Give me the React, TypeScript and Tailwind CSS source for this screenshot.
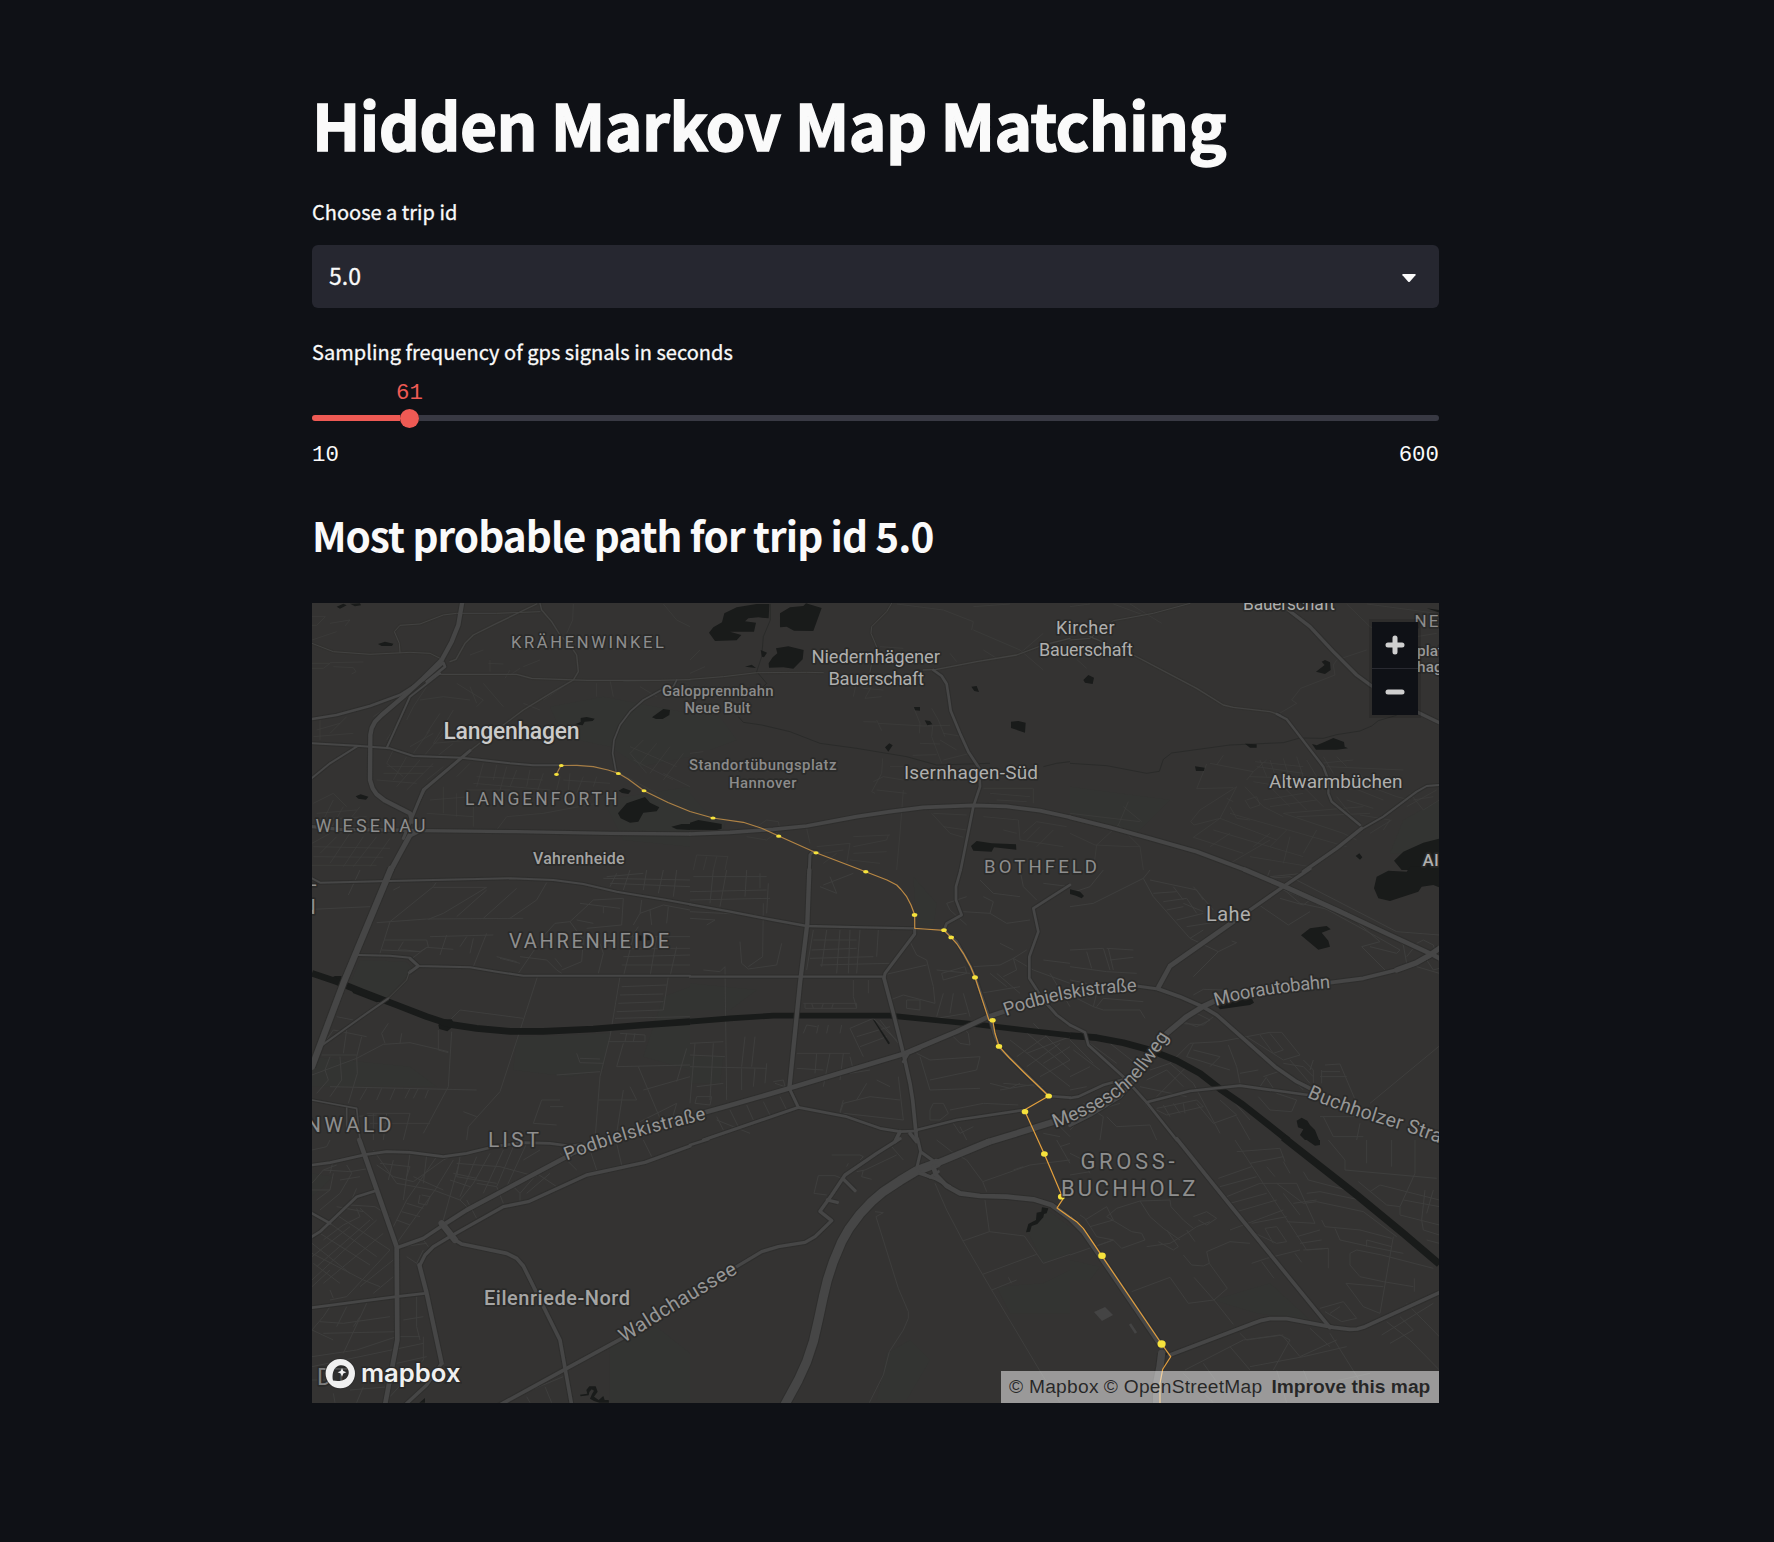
import React from "react";

type Line = [width: number, path: string];
interface Tile {
  x: number;
  y: number;
  green?: string;
  water: string;
  rail?: Line[];
  stream?: string;
  minor: string;
  roads: Line[];
}

/* Each tile holds its vectors at three units per map pixel. */
const tiles: Tile[] = [
  {
    x: 310,
    y: 600,
    green: "M720 320L880 290L1140 340V470L990 500L900 440L760 410ZM880 600L1140 560V740L940 720Z",
    water:
      "M80 20L100 11L110 16L90 26ZM120 11L150 10L153 16L135 19ZM204 132L225 125L250 131L246 138L215 138ZM1026 352L1060 327L1080 330L1078 345L1058 357L1038 357ZM795 373L812 366L812 354L830 351L854 356L848 363L824 365L818 376ZM137 589L152 583L175 590L168 599L145 596ZM926 572L940 564L963 572L955 582L936 579ZM924 640L950 610L1005 591L1020 608L1048 622L1040 634L1000 638L985 665L960 668L932 655ZM1084 680L1115 672H1140V690L1100 688Z",
    minor:
      "M6 50H46L20 76H6M60 70L120 60L105 78M6 190H60L40 205H6M6 120L80 95M60 188L160 186M70 200L130 203L138 215L125 222M540 180V215M535 190L580 192M600 210L585 235M630 205L600 225M480 165L520 150M790 12L788 60L770 100M1060 12L1100 60L1140 80M860 250V290M900 240L910 290M940 245L1020 242M990 260L1040 290M700 300L760 260M640 310L690 330M520 250L580 320M440 250L520 300L500 320M350 260L310 320L290 360M330 300L400 290L480 300M390 340L350 400M430 330L370 430M280 340L230 420M220 330L190 350M60 400L110 350M20 390L90 370M10 410L130 400M30 350V420M370 430L480 420M300 440L370 400M310 460L360 390M340 470L400 400M380 470L430 430M250 450L230 490L280 530M290 470L250 540M330 480L260 560M370 490L290 570M400 500L350 540M230 500L370 500M220 520L340 520M200 540L320 550M480 490L440 530M520 490L500 560M560 495L550 540M590 500L570 570M620 510L600 560M660 510L650 560M700 520L680 580M500 530L700 540M490 550L720 570M470 570H600M750 530L740 570M780 520L775 570M820 530L800 580M860 530L850 560M760 540L900 550M400 560V640M440 580V650M490 610V680M360 600L480 590M350 640L490 650M10 610L70 580L110 620M20 640L140 630M30 680L70 600M60 690L100 620M90 695L150 620M10 660L170 650M6 730L60 700M30 760L80 710M60 790L120 700M100 800L160 710M130 800L200 710M180 800L240 715M10 740L240 745M10 770L220 772M6 796H200M1000 420L960 460L1010 520M1040 430L990 490M1080 440L1020 520M1120 460L1060 540M960 440L1100 500M970 480L1090 540M930 520L1040 580M1060 520L1140 560M560 690L590 650L700 640M700 640L860 610M500 310L480 260M690 180L640 200",
    roads: [
      [3, "M6 130L70 155L180 163L300 157L360 160L400 180M270 158L268 130L253 95L270 76L330 72L400 45L440 40L560 40L690 35"],
      [4, "M690 10L695 30L725 65L750 105L780 135L800 165L805 215L790 240L730 275L640 330L580 375M420 185L438 178L465 130L490 105L560 70L680 12"],
      [4, "M380 223L620 223L665 235L830 241L1050 241L1140 239M580 375L480 452L350 560L330 600L300 660"],
      [6, "M6 430L140 437L240 445L310 468L455 473L600 490L670 496H750M6 534L60 490L140 440M230 444L250 400L300 290L390 220"],
      [5, "M918 515L908 460L912 420L930 375L960 335L1000 300L1050 272L1090 260L1100 240"],
      [8, "M6 357L80 345L180 318L270 285L340 240L400 188L405 200L350 245"],
      [13, "M456 10L445 75L425 125L395 180L340 235L280 290L215 345L195 365L185 385L181 405L180 540L188 565L200 583L225 602L300 640L307 665"],
      [10, "M6 680L90 688L240 690L340 692L620 695L900 700L1140 702"],
      [15, "M330 690L300 705L270 760L243 810"],
      [9, "M307 650L280 715M480 452L340 570L307 650"],
    ],
  },
  {
    x: 690,
    y: 600,
    green: "M0 330L90 350L140 420L60 450H0ZM0 580L60 650H110L100 690H0Z",
    water:
      "M57 98L70 82L96 67L103 40L140 22L200 12H238L236 55L205 52L175 55L165 64L198 68L192 95L160 95L120 95L154 105L140 121L75 123ZM270 40L300 22L340 18L348 10L395 24L370 93L312 92L290 80L270 82ZM236 190L248 172L262 160L258 145L295 139L341 150L338 178L310 206L280 202L237 203ZM212 150L231 158L222 172L216 170ZM165 200L185 194L198 204ZM844 260L860 258L867 276L853 273ZM672 321H690V332L675 331ZM704 361L720 363L727 373L712 376ZM585 442L598 430L608 436L595 455ZM963 365L985 363L1007 368L1005 398L963 384ZM843 738L860 723L905 730L978 733L979 749L912 742L905 755L850 752ZM0 668L25 660L95 672V686L80 690L0 689Z",
    stream:
      "M241 12V60L220 110L215 170L200 215L230 250L200 280M145 350L160 367L215 375L300 395L390 430L500 445L650 470L740 495L900 490M1060 500L1100 490L1140 485",
    minor:
      "M0 180L30 150M0 220L45 200M500 245L490 290M550 250L525 295L575 290M520 265L580 270M560 360L575 392M520 365L560 366M565 370L700 378L780 376M672 325L690 370L688 400M725 325L745 360L765 410M728 378L725 410L755 490M690 430L750 432M668 466L740 464M760 400L820 410M750 420L800 450M760 480L840 460M578 475L575 520L545 575L555 580M550 545L580 530L640 540M560 570L650 580M640 570L630 700L620 810M600 500L640 500M880 565H1030V610M900 580L1020 590M920 600L1010 605M730 640L830 645M725 640L780 700L820 712M760 680L830 690M880 650L985 660L990 720L1120 740M1000 700L1040 665L1130 680M1010 720L1050 680M1040 740L1090 690M940 690L980 700M350 685L360 730M380 740L480 730L470 790M400 760L460 750M490 740L590 720L595 705M490 710L600 705M490 760L590 755M480 780L570 790M400 790L440 760M10 810L20 765L115 770M40 810L50 770M70 810L80 770M105 810L113 770M170 710L230 720L270 690L265 665L230 660L185 690M620 12L760 30L850 65L845 90M850 90L990 150L1060 210M780 160L800 185M880 150L920 175M990 160L1060 100M570 140L640 145M560 150L610 180M0 460L40 455M850 20L960 12",
    roads: [
      [3, "M0 238L100 230L200 218L350 217L400 218M540 215L545 190L562 145L543 100L545 80L590 35L605 10"],
      [4, "M700 210L740 208L860 185L980 165L1060 135L1140 115"],
      [8, "M730 210L755 228L770 252L776 290L782 332L810 400L835 455L868 505L870 560L850 620L812 810"],
      [11, "M0 702L120 697L250 688L350 678L500 650L600 635L700 622L850 616L950 619L1050 632L1140 652"],
      [9, "M358 810L360 765L368 755L385 758"],
    ],
  },
  {
    x: 1070,
    y: 600,
    green: "M0 560L300 600L200 700L0 640ZM1000 660L1108 600V760H960Z",
    water:
      "M738 215L764 195L755 185L765 180L780 187L782 210L765 222ZM40 240L55 225L72 233L68 252L45 248ZM525 431L560 433V443L540 443ZM375 499L404 503L402 513H378ZM726 432L740 436L765 425L790 414L822 426L824 440L834 445L800 449H738ZM972 782L1000 755L1060 728L1108 716V810H995ZM857 768L868 760L877 772L870 779ZM1070 25L1108 30V38Z",
    stream:
      "M0 490L110 497L230 520L268 514L280 478L305 459L480 435L640 428L690 414L760 415L800 404L870 393L905 378L925 362L980 346",
    minor:
      "M20 178L50 205M0 20L60 12M180 12L275 70M130 12L220 45M830 12L900 80L1000 130M890 12L1100 40M1040 110L1100 100M620 345L680 310L665 300L692 265L795 225L790 195L800 180L890 150M460 466L440 495M410 492L380 566L490 563M420 490L550 515M500 560L390 630L362 665L372 675L450 655L500 560M530 540L550 515L590 480M525 560L580 620L640 650M480 620L500 655L540 660M470 595L490 605M530 600L560 590L570 615L540 625L525 600M555 485L700 500M560 500L700 520M540 530L700 535M550 545L640 560M570 480L590 530M600 480L620 540M640 475L660 540M680 470L700 530M710 480L740 530M760 470L790 520M800 470L830 500M750 490L850 480M770 500L1000 510M600 560L660 620M640 560L710 630M700 560L760 620M580 600L700 580M600 620L740 600M640 640L880 620M680 650L900 640M790 540L900 550L950 530M830 530L840 570M870 520L900 570M800 590L840 640M830 600L910 625M840 560L940 600M900 560L980 590L1020 600M1020 580L1060 630L1108 600M1030 600L1090 590M1010 620L1100 570M870 645L960 660L940 690M900 700L965 660M640 640L820 700L860 720M480 640L830 740M370 712L450 655L620 720M430 690L700 770M480 700L420 740M550 740L600 700M600 740L650 690M640 790L660 710M540 770L720 800M480 790L600 720M700 760L740 690M370 712L520 760M175 605L145 675L80 735L70 810M145 675L210 740L220 810M0 640L210 665M0 700L75 735M160 620L215 665M210 740L180 740L75 735",
    roads: [
      [3, "M0 120L60 115L130 62L250 40L360 10"],
      [4, "M60 110L190 165L380 265L460 315L490 322L600 335L630 345"],
      [7, "M620 342L650 358L675 390L760 500L775 540V580L785 605L870 675"],
      [10, "M655 30L720 80L790 155L860 225L905 258M1040 335L1108 368"],
      [6, "M870 690L940 650L1040 575L1070 558L1108 555"],
      [10, "M875 685L800 745L700 815"],
      [12, "M0 652L120 682L240 715L380 755L524 809"],
    ],
  },
  {
    x: 310,
    y: 870,
    green: "M150 270L290 275L310 300L230 385L120 340ZM620 500L900 490L880 600L780 620L610 600ZM1060 380L1140 350V600L1000 560ZM6 560L300 590L380 650H6Z",
    water: "M60 325L75 318H95L92 335ZM110 340L190 370L230 390L200 397L130 370ZM385 465L400 448L425 448L435 465L412 484L388 477ZM985 196L1035 200L1030 210L985 212Z",
    rail: [
      [20, "M6 310L80 335L160 367L260 405L350 440L420 463L500 475L600 484H700L850 477L1000 465L1140 455"],
    ],
    minor:
      "M6 118L180 110M150 0L115 75M378 38L370 50L240 155L210 250M270 50L250 60M370 52H530L400 130L355 148M530 60L440 140M620 55L520 145M710 38L680 90L600 145M200 158L350 147L640 145M222 210L350 210L355 230L330 245L285 240L265 240L280 215M215 240L330 245M300 270L350 232L430 238M360 200L550 195M410 195L390 255M470 200L450 230M490 205L480 250M530 190L490 290M570 265L630 280M560 260L620 275M683 225L625 310M630 260L710 270L740 300L755 310M690 210L735 160L780 155L820 210L815 275L755 300M780 155L850 90L940 85L935 165L830 175M810 100L930 115M880 110V130M800 150L850 160M870 220L880 250L865 310M735 265L755 290M890 20L1000 10M900 40L1140 50M920 10L900 50M960 0L940 60M1010 0L1000 60M1060 0L1045 70M1100 0L1090 80M1140 30L880 25M995 90L990 130L1060 105L1140 120M1075 110L1070 160M970 165L990 130M985 170L965 200H1140M1020 120L1025 165M945 235H1140M940 260L1140 255M935 285H1140M1100 230L1080 320M1040 200L1020 320M970 200L940 320M930 320L900 500L870 620L855 810M935 350L1070 345M930 375L1060 372M925 400L1060 395M920 425L1060 420L1075 320M915 445L1140 440M683 318L650 420L570 665L475 770L470 810M420 450L450 420L640 445M425 485L415 650L340 790M385 480V540L415 548M35 530L70 480L170 500M110 480L100 550M155 500L140 560L142 610L115 700M35 555H140M80 440L130 450M235 460L215 490L225 520M275 490L270 520M6 615L140 565L220 523L300 518L415 545M60 560L45 600L55 630L20 670M90 560L95 630L60 680M60 650L280 655L500 660M170 655L150 690M215 655L200 690M255 655L240 690M300 655L285 685M325 655L310 685M355 660L345 685M895 515H1005V495L930 490M950 490L945 515M975 490L970 515M800 550L810 578L880 580M810 565L870 567M940 520L920 590L1140 585M740 615L870 605M865 690L980 690L960 650M695 690H750M695 690L670 760L740 765M985 590L1050 745M1130 535L1100 635M1000 660L1140 620M940 660L920 790M720 710H760M460 725L500 740M980 760L1100 700L1080 770M170 730H300L280 810M180 760H360M190 730V810M230 730L220 810M130 740L200 735",
    roads: [
      [6, "M6 25L30 38L240 33L600 25L730 30L820 42L920 65L1070 90L1140 103"],
      [6, "M145 255L240 257L300 263L325 288L480 292L560 305L640 317H1140"],
      [9, "M300 265L325 288L298 308"],
      [6, "M30 530L100 480L170 430L235 385"],
      [3, "M235 385L290 330L300 300"],
      [5, "M6 690L140 715L150 810M110 715V780"],
      [19, "M243 -4L100 340L6 590"],
    ],
  },
  {
    x: 690,
    y: 870,
    green: "M0 340L200 360L120 420H0ZM670 20L740 100L730 170L680 170ZM0 560L100 560L90 640H0Z",
    water: "M548 448L555 452L600 520L595 523Z",
    rail: [[17, "M0 455L120 445L250 437H600L700 447L850 462L1000 480L1140 496"]],
    minor:
      "M70 0L60 100M110 0L90 110M0 65L230 60M0 90L240 85M10 20L230 20M170 0L165 80M210 10V55M235 40L230 130M0 125L100 130L200 135M0 145L75 150L50 165M150 215L155 280L175 297L260 285L275 220M220 100L218 260L175 290M105 290L110 690M40 300L90 305L105 290M370 180L350 300M410 180L395 290M450 180L440 310M480 180L475 310M510 180L500 310M370 210H500M365 240L500 235M360 265L550 260M390 285L600 280M565 180L560 260M490 330V380L500 415M535 330V370M340 400H500V415H345V400M365 400L370 415M400 400L395 415M430 400L425 415M580 315L710 285M655 205L680 255L710 270L730 350L735 400L640 375L600 390M740 300L840 310M755 310L825 290L830 310L760 330L755 310M650 390H690V420L650 415V390M760 370L740 440M790 370L780 430M820 370L840 440M740 445L830 430M780 490L810 520L840 525L835 490L810 460M900 310L950 350M920 310L990 370M870 370L990 350M340 490L350 465L380 470M380 490L385 465M410 490L415 465M450 490L455 465M480 475L550 445L630 520M500 500L600 470M510 530L590 500M480 475L520 560M570 450L640 540M320 550H480M320 595L400 600M380 550L375 610M420 550L400 650M460 550L450 630M480 560L490 600M0 520L100 515M0 555L105 560M0 590L230 595M15 520L0 700M70 520L60 690M165 500L155 590M195 500L185 590M155 595V660M195 595L190 650M230 580L225 640M20 650L100 640M15 700L60 705L65 680L20 680ZM80 740L100 780M120 720L150 780M170 705L190 750M220 695L240 735M270 680L290 720M80 750L180 790M250 635L280 630L285 650L255 640M450 730L460 700L540 680L630 690M530 640L500 690M560 630L600 650M460 730L640 750L625 620M450 725L460 690M480 610L540 600M420 620L500 590M690 560L720 660L870 655M680 550L720 570L870 560L860 600L720 630M720 720L730 700L760 700L775 730L750 750H720ZM780 720L880 700L985 705M810 770L830 810M790 760L810 790L850 770M870 30L910 70L990 80M880 80L910 95L900 130L950 160M990 0L1000 50L1040 90M950 160L1020 150M900 130L820 125M830 80L770 100L780 120L830 165M930 220L970 240M970 265L980 300L940 320M850 290L930 285L970 265L1030 300L1140 340M1010 240L970 265M1060 40L1140 50M1060 270L1140 280M1080 310L1140 410M940 640L1060 650M930 660L1050 640M1010 550L1140 500M1060 580L1140 530M960 510L1140 650M1000 480L1140 600M1030 460L1140 570M980 560L1080 490M1010 590L1110 520M1050 620L1140 570M900 640L960 655L990 640M1140 720L1080 770M1100 760L1140 800M1060 790L1110 800M390 50L440 70L420 20M400 45L490 10",
    roads: [
      [7, "M0 103L120 125L250 150L350 168L520 172L674 175"],
      [7, "M0 320H580"],
      [9, "M674 175V192L585 310L582 325"],
      [11, "M582 325L610 430L640 550L660 640L668 690L680 810"],
      [13, "M358 0L352 160L330 340L298 655"],
      [9, "M298 655L325 712"],
      [8, "M325 712L470 740L570 775L630 785L680 783"],
      [14, "M40 728L100 712L298 655L640 552L800 485L895 440L940 425"],
      [9, "M640 575L655 550L690 535"],
      [9, "M40 810L325 712"],
      [8, "M680 780L800 750L1000 720"],
      [8, "M812 0L798 50V90L815 135L770 160L762 180L800 215L842 290L857 325L900 450L915 500L930 535L1076 678L1140 683M1140 45L1030 115L1045 185L1018 260V325L1060 390L1100 435L1140 465"],
      [19, "M895 816L990 787L1140 740"],
      [11, "M630 785L615 815M660 790L680 815"],
    ],
  },
  {
    x: 1070,
    y: 870,
    water:
      "M912 55L920 20L955 2L1010 5L1020 -10H1108V52L1090 45L1055 50L1045 65L960 93L925 85ZM693 196L720 175L770 168L782 178L755 188L775 212L780 230L745 239ZM680 752L695 743L712 752L720 765L735 780L747 810H705L690 795L700 778L684 772ZM440 405L545 385L552 398L540 405L450 418ZM0 58L30 65L42 78L35 85L18 77L0 72Z",
    rail: [[20, "M0 497L80 503L160 518L240 540L320 572L390 610L450 657L520 705L590 760L655 812"]],
    minor:
      "M0 110L70 100L220 25L240 0M220 25L250 80L360 205L445 245L370 320M0 70L60 50L100 0M240 30L380 60L400 90M250 70L320 65M280 95L350 85L380 130M290 120L340 110M320 150L400 130M340 100L400 125M310 50L340 90M350 170L480 150M370 50L430 120M445 245L500 218L485 213M360 205L400 180M560 100L655 165L720 125M620 40L690 100L830 130L930 215L875 230L945 300M600 20L700 10M640 60L690 80L720 90L700 105L630 85M600 0L590 25L660 20L980 185L1108 195M700 80L920 200L990 240L980 250L900 230M960 190L1000 225L1010 280L980 300M1040 220L1060 210L1090 225L1100 260M1010 260L1030 235L1060 240M1070 270L1090 300L1108 295M1040 290L1108 310M0 240L100 235L120 300M50 245L65 295M115 235L130 300M110 235L190 240M120 270L190 262M0 290L110 305L200 310M0 330L50 340L80 370L70 410L10 380M80 410L100 385L220 395M70 410L100 420L210 420L225 445M0 360L60 370M370 375L400 358L460 360M330 460L400 465L430 440M380 430L420 450L380 470L340 455M360 520L450 515L530 500L600 487H635L690 555L640 570L530 500M570 495L610 550L640 540L600 490M475 525L500 590L510 640M370 520L350 560L480 600M370 540L450 560L420 590M240 600L300 580L370 640M230 630L290 600L340 650M260 680L320 620L350 590M210 650L350 680M300 580L360 520M510 610L565 600M580 620L640 600L700 660M590 625L620 670L680 690L665 725L600 720L565 680M590 620L570 650M640 580L700 590L730 620M660 570L720 640M700 570L730 600V640M730 570L720 600M765 585L810 582L860 700M755 605H810M750 620H830M755 600V640M900 700L1108 528M750 740L880 740L960 760M760 740L790 800H880M870 760L860 810M110 740L140 770L240 765L260 810M200 670L240 720M260 715L380 690L400 710L290 735L260 720M280 705L300 740M310 700L330 730M340 700L345 730M370 640L450 790M450 690L500 735L430 760L380 700M0 620L60 590M0 660L50 650M10 540L90 600M60 520L140 580M120 520L190 575M0 510L70 580M460 660L540 750M40 700L100 740M100 740L90 810M500 740L540 810M0 780L50 730L150 700",
    roads: [
      [8, "M0 465L45 487L55 525L165 625L230 697L320 810"],
      [8, "M0 684L25 680L100 645L165 627M230 697L360 663L510 647L715 675"],
      [9, "M200 348L265 357"],
      [11, "M265 357L330 380L398 410L440 435L615 590L680 635L730 660"],
      [14, "M265 352L300 288L490 155"],
      [10, "M490 155L640 50L720 -4"],
      [14, "M524 -1L640 48L800 120L960 195L1090 255L1108 265"],
      [11, "M780 338L880 325L980 300L1040 278L1080 258"],
      [16, "M1108 235L1080 255L1040 278L980 300M430 395L398 410L350 440L290 490L280 510"],
      [12, "M210 610L150 680L60 735L0 765"],
    ],
  },
  {
    x: 310,
    y: 1140,
    green: "M900 620L1040 560L1140 640V788H900ZM6 100L70 110L6 170Z",
    water:
      "M328 788L345 774V788ZM810 764L832 761L829 750L838 739H857L863 755L852 770L866 780L880 768L884 780L896 780L897 788H868L852 783L840 776L846 762L852 752L845 748L838 756L836 766L812 769Z",
    minor:
      "M6 30L50 20L60 0M6 130L40 90L80 75M20 180L60 150L70 100M40 90L120 95L180 85M30 210L90 160L125 100L110 75M6 150L60 150M70 60L60 100M90 120L150 110M140 145L120 190M150 205L190 240M120 195L195 200L240 230M140 205L150 230L100 255L40 300M80 200L160 215M80 225L240 330M60 250L200 350M30 280L180 375M6 310L120 400M6 340L160 420L210 440M10 370L90 430M200 240L6 420M220 280L40 430M240 330L110 470L60 480M250 360L150 440M250 410L190 460M6 440L60 390M60 450L70 475M180 240L20 380M120 260L6 350M200 75L250 110L310 125L400 60L420 50M190 30L260 130L370 150L450 180L480 210M210 70L300 80L290 110M250 60L235 120M300 40L280 180M350 45L340 130M380 50L290 180L250 260M430 60L375 150L260 310M450 60L400 240M500 50L450 170M540 40L490 130L450 180M580 30L520 160M610 20L560 140M650 10L590 140M440 70L570 80L680 110M430 100L500 115M420 120L480 140M450 50L440 110L560 130M330 165L325 190L350 195L360 170L335 165M290 190L340 205M275 215L330 230M260 240L300 255M470 180L500 235M500 130L560 140L580 190M600 130L630 160V185M680 100L740 140M700 80L630 160M650 160L720 100M690 30L640 60M750 40L800 90M840 30L860 90M920 10L935 75M1000 0L1025 50M310 110L400 150M280 320L350 310M290 350L320 370L340 330M340 300L355 320M6 570L40 530L60 500M110 500L80 560M170 490L100 640M30 545L100 550L240 530M40 580L260 575M6 570L70 600M6 650L140 630L260 590L330 590M6 680L340 610M130 560L150 530M320 470V560L330 600M340 590V660L240 770M280 540L340 530M260 670L350 650M6 720L50 720M75 788L70 760M120 750L240 740M140 788L160 740M590 780L760 710M650 770L660 788M705 740L725 788",
    roads: [
      [8, "M6 75L60 68L170 43L230 35L300 37L400 50L470 40L560 18L640 8L720 10L780 18L820 12"],
      [8, "M6 290L30 275L140 170L195 153M6 220L60 250"],
      [14, "M148 0L260 320L262 600L225 795"],
      [8, "M6 503L260 470L345 460"],
      [10, "M262 323L340 295L400 255"],
      [13, "M395 258L470 210L780 45"],
      [9, "M780 45L870 10"],
      [10, "M330 375L345 345L370 320L420 290L580 200L655 185L830 105L1005 67L1140 18"],
      [19, "M395 250L435 300"],
      [11, "M435 300L455 312L590 340L620 355L640 378L750 600L785 795"],
      [13, "M328 375L350 460L395 670"],
      [10, "M395 670L350 735L285 795"],
      [11, "M560 800L765 688L940 593"],
    ],
  },
  {
    x: 690,
    y: 1140,
    green: "M920 440L1060 430L1140 390V520H960ZM590 640L660 600L720 660L650 780H560ZM1010 270L1060 200L1140 260V340L1060 370Z",
    water:
      "M1056 202L1075 205L1070 220L1062 222L1060 232L1042 252L1025 258L1020 275L1008 277L1015 252L1038 240L1040 218L1054 215Z",
    minor:
      "M425 45H510L520 50L510 60M470 80L475 70M500 95L525 90L620 45M520 90L515 110L545 118M605 20L640 60M385 107H435L455 115M385 107L372 160L410 165M555 215L580 218L558 230L625 445L655 515V535L640 570L598 635L580 705L538 788M735 130L770 210L820 305L905 450L1060 710L1110 788M740 0L785 35L830 60L878 125L890 155M885 180L898 275L818 303M898 275L1003 288L1060 370L1140 343M878 403L1040 343M878 125L1020 75L1140 60M905 450L980 420M955 412L965 430M1100 0L1140 70M1110 20L1140 10M970 90L1000 80M500 220L530 180L575 150",
    roads: [
      [8, "M0 15L55 -2"],
      [10, "M135 383L215 335L265 320L345 307L375 290L425 242L390 214L425 165L465 105L560 40L630 -4M458 115L495 152M412 180L442 187"],
      [27, "M275 812L325 720L350 665L370 605L385 540L400 470L412 420L430 365L455 305L478 265L510 222L545 185L580 155L630 122L680 92L740 70"],
      [20, "M740 70L895 6"],
      [9, "M683 -4L692 35L680 85M692 35L740 70M692 95L720 112L745 95"],
      [14, "M730 80L738 105L770 138L810 160L870 168L950 170L1030 178L1085 195L1140 235"],
      [10, "M690 100L735 115L780 140"],
    ],
  },
  {
    x: 1070,
    y: 1140,
    green: "M430 480L600 430L720 540L560 520ZM0 360L90 380L60 420H0Z",
    water: "M710 0H750V15L735 17ZM285 638L292 642L287 648Z",
    rail: [[22, "M640 -8L860 165L1000 280L1108 372"]],
    minor:
      "M0 345L130 300L75 320M45 240L110 200L130 240L60 260M30 225L45 235L80 290L130 300L155 325L225 300L215 280L185 275L110 230L140 205L210 183L300 180L303 200L340 240L370 265M210 183L240 230L280 265L330 300M230 320L300 310L350 280L380 260L420 245M265 305L310 330L325 320L290 270M370 230L410 215L440 235L410 255L385 240M350 270L375 305M340 345L365 375L400 378L418 370L410 335L480 305L540 310M418 370L472 445L432 480L355 490L300 412L185 455M372 412L432 480L490 553M545 370L590 355L690 330M575 365L612 415M675 340L695 367M495 0L710 330L775 325V385M500 35L630 25L645 65M540 70L640 50M445 115L545 80M450 140L560 110M470 170L570 130M480 190L590 160M500 215L620 180M480 270L640 210M590 80L615 110M640 65L660 100M570 130L680 130L735 250L650 245M620 130L700 190L740 185L880 215L980 290M640 160L690 225M670 190L740 180M545 250L650 230M555 280L620 310L650 305L620 260L585 265L610 310M680 290L750 270M690 310L755 300M700 330L775 325M710 160L750 155L870 180L900 210M700 95L715 120L830 150M755 240L765 260L870 270L965 295M795 265L810 300L900 320L1000 340M890 320L890 300L965 320M840 340L860 330L935 345L1090 385M840 340V375L870 410L940 425L1030 440M970 290L930 520L880 500L828 430L940 440M1033 415V455M750 505L820 485L860 535L815 545L765 515M780 520L810 500M775 0L825 60V90L1100 115M890 0V70M965 0V80M1035 0V100L990 200V225L1108 255M865 125L950 195L990 200M900 155L930 135L1108 180M1065 150L1055 240M1090 150L1070 220M1000 180L1108 200M1055 240L1060 270L1108 285M1070 300L1108 310M1010 490L1108 590M935 585L1090 490M960 610L1030 570L990 530M950 545L1020 600L1108 690M780 580L880 740M720 565L780 620M640 590L690 650L800 600M480 620L540 690M510 580L530 600L640 585M345 690L520 600L630 585L660 600L610 690M400 670L450 740M340 700L430 788M540 680L700 650L830 620M620 690L650 788M700 690L720 740L900 700M0 40L40 60L60 100M0 105L60 95",
    roads: [
      [11, "M320 -4L480 195L780 563"],
      [11, "M300 645L550 550L575 541L600 536H650L790 562L840 568L862 567L885 560L1108 458"],
      [22, "M275 640L270 680L260 730V800"],
      [15, "M0 235L40 275L95 355L275 620"],
    ],
  },
];

const route =
  "M556.3 774.3L561 765.5L577 765.4L593.3 766.7L608 770L618.3 773.3L628 779L644 790.7L668 802.5L690 811.5L713 818L743.3 822.3L761.7 828.3L778.7 836L816 852.7L865.7 871.7L887 880L896.7 885L901 889.500L906.7 896.7L911 905L914.7 914.7V928.3L924 929L944 930.3L951 937.3L957 944L963.3 953.3L970.7 966.7L975 977.3L989 1020.3H992.7L995 1033.3L999 1046.3L1009 1057.500L1023.3 1071.7L1048.7 1096L1024.3 1110L1044.3 1154L1061.3 1194.3L1062.7 1199.3L1057 1208L1070 1217.3L1077 1222L1083.3 1228.3L1101.7 1255.7L1161.7 1344L1170.7 1356.7L1162.7 1369.3L1160 1383.3V1404";

const stops: [number, number, number, number][] = [
  [556.5, 774.5, 2.4, 1.4], [561.3, 765.6, 2.4, 1.5], [618.3, 773.5, 2.5, 1.5], [644, 790.7, 2.5, 1.5],
  [713, 818, 2.6, 1.6], [778.7, 836.2, 2.6, 1.6], [816, 852.8, 2.6, 1.6], [865.8, 871.7, 2.7, 1.7],
  [914.6, 915, 2.8, 1.9], [944, 930.2, 2.8, 1.9], [951.2, 937.4, 2.8, 1.9], [975, 977.4, 2.9, 2.1],
  [992.6, 1020.3, 3.1, 2.3], [999, 1046.4, 3.2, 2.4], [1048.7, 1096, 3.3, 2.6], [1025, 1111.7, 3.3, 2.6],
  [1044.4, 1154, 3.4, 2.8], [1061.4, 1196.7, 3.5, 2.9], [1102, 1255.8, 3.8, 3.3], [1161.6, 1344, 4.1, 3.7],
];

interface Label {
  t: string;
  x: number;
  y: number;
  w: number;
  s: number;
  c: string;
  b?: number;
}

const labels: Label[] = [
  { t: "KRÄHENWINKEL", x: 511, y: 648.3, w: 153, s: 16.5, c: "#8e8e8e" },
  { t: "Langenhagen", x: 443.5, y: 739, w: 136, s: 23, c: "#cbcbca", b: 500 },
  { t: "LANGENFORTH", x: 465, y: 804.5, w: 152.5, s: 17.5, c: "#8e8e8e" },
  { t: "WIESENAU", x: 315.5, y: 832.3, w: 110, s: 18, c: "#8e8e8e" },
  { t: "Vahrenheide", x: 533, y: 864.3, w: 91.5, s: 16, c: "#a5a5a4", b: 500 },
  { t: "Galopprennbahn", x: 662, y: 696, w: 111.5, s: 15, c: "#8b8b8b", b: 500 },
  { t: "Neue Bult", x: 684.5, y: 712.7, w: 66, s: 15, c: "#8b8b8b", b: 500 },
  { t: "Standortübungsplatz", x: 689, y: 770, w: 147.5, s: 15, c: "#8b8b8b", b: 500 },
  { t: "Hannover", x: 729, y: 787.6, w: 67.5, s: 15, c: "#8b8b8b", b: 500 },
  { t: "Niedernhägener", x: 811.5, y: 662.6, w: 128.5, s: 18.5, c: "#afafae" },
  { t: "Bauerschaft", x: 828.5, y: 684.6, w: 95.5, s: 18.5, c: "#afafae" },
  { t: "Isernhagen-Süd", x: 904, y: 779.3, w: 134, s: 19, c: "#afafae" },
  { t: "Kircher", x: 1056, y: 634, w: 58.5, s: 18, c: "#afafae" },
  { t: "Bauerschaft", x: 1039, y: 656, w: 94, s: 18, c: "#afafae" },
  { t: "Bauerschaft", x: 1243, y: 609.5, w: 92, s: 17.5, c: "#afafae" },
  { t: "NE", x: 1414.5, y: 627, w: 24, s: 17, c: "#8e8e8e" },
  { t: "platz", x: 1417, y: 656, w: 34, s: 15.5, c: "#999", b: 500 },
  { t: "hagen", x: 1417, y: 672, w: 43, s: 15.5, c: "#999", b: 500 },
  { t: "Altwarmbüchen", x: 1269, y: 788, w: 133.5, s: 19, c: "#afafae" },
  { t: "Al", x: 1422.5, y: 866, w: 16, s: 17, c: "#afafae", b: 500 },
  { t: "BOTHFELD", x: 984, y: 872.6, w: 113, s: 18.5, c: "#8e8e8e" },
  { t: "Lahe", x: 1206, y: 920.6, w: 44.5, s: 20, c: "#afafae" },
  { t: "VAHRENHEIDE", x: 509, y: 948, w: 160, s: 20, c: "#8e8e8e" },
  { t: "-", x: 311, y: 891, w: 8, s: 20, c: "#8e8e8e" },
  { t: "N", x: 301.5, y: 914, w: 15, s: 20, c: "#8e8e8e" },
  { t: "NWALD", x: 306, y: 1132.3, w: 85.5, s: 21, c: "#8e8e8e" },
  { t: "LIST", x: 488, y: 1147.3, w: 51, s: 21, c: "#8e8e8e" },
  { t: "GROSS-", x: 1080.5, y: 1168.5, w: 94, s: 22, c: "#8e8e8e" },
  { t: "BUCHHOLZ", x: 1061, y: 1195.5, w: 134.5, s: 22, c: "#8e8e8e" },
  { t: "Eilenriede-Nord", x: 484, y: 1304.6, w: 146, s: 20, c: "#a5a5a4", b: 500 },
  { t: "DT", x: 317, y: 1385, w: 31, s: 23, c: "#7d7d7d" },
];

const streets: { id: string; d: string; t: string; w: number; s: number }[] = [
  { id: "st1", d: "M567 1160.500Q625 1137 725 1115", t: "Podbielskistraße", w: 145.5, s: 18.5 },
  { id: "st2", d: "M1006 1016Q1070 992 1150 991", t: "Podbielskistraße", w: 134, s: 18.5 },
  { id: "st3", d: "M1216 1006Q1262 992 1345 987", t: "Moorautobahn", w: 116, s: 18.5 },
  { id: "st4", d: "M1055 1128Q1110 1108 1135 1083Q1155 1060 1177 1024", t: "Messeschnellweg", w: 150, s: 19 },
  { id: "st5", d: "M1307 1097Q1340 1112 1385 1125Q1430 1138 1480 1160", t: "Buchholzer Straße", w: 163, s: 19.5 },
  { id: "st6", d: "M624 1343Q690 1300 752 1265", t: "Waldchaussee", w: 133.5, s: 20 },
];

function MapCanvas() {
  const place = (t: Tile) => `translate(${t.x} ${t.y}) scale(0.33333)`;
  return (
    <svg viewBox="312 603 1127 800" className="block h-full w-full" fill="none" strokeLinejoin="round">
      <defs>
        <linearGradient id="fade" gradientUnits="userSpaceOnUse" x1="0" y1="765" x2="0" y2="1100">
          <stop offset="0" stopColor="#a67d45" />
          <stop offset=".5" stopColor="#c28c42" />
          <stop offset="1" stopColor="#e39f3c" />
        </linearGradient>
      </defs>
      <rect x="312" y="603" width="1127" height="800" fill="#343332" />
      {tiles.map((t, i) => (
        <g key={i} transform={place(t)}>
          {t.green && <path d={t.green} fill="#333432" />}
          <path d={t.minor} stroke="#3e3e3d" strokeWidth={t.y > 600 ? 3 : 2} />
          {t.stream && <path d={t.stream} stroke="#272827" strokeWidth="2.2" />}
          <path d={t.water} fill="#191b1a" />
          {t.rail?.map(([w, d], k) => (
            <path key={k} d={d} stroke="#191b1a" strokeWidth={w} />
          ))}
        </g>
      ))}
      {tiles.map((t, i) => (
        <g key={i} transform={place(t)} stroke="#2d2d2c">
          {t.roads.map(([w, d], k) => (
            <path key={k} d={d} strokeWidth={w + 6} opacity={w > 4 ? 0.8 : 0.3} />
          ))}
        </g>
      ))}
      {tiles.map((t, i) => (
        <g key={i} transform={place(t)} strokeLinecap="round">
          {t.roads.map(([w, d], k) => (
            <path key={k} d={d} strokeWidth={w} stroke={w > 4 ? "#464646" : "#424241"} />
          ))}
        </g>
      ))}
      <path d="M1094 1312L1105 1307L1113 1315L1102 1321Z" fill="#444" />
      <path d="M1130 1324L1136 1333" stroke="#444" strokeWidth="2.5" />
      <path d={route} stroke="url(#fade)" strokeWidth="1.2" />
      {stops.map(([x, y, rx, ry], i) => (
        <ellipse key={i} cx={x} cy={y} rx={rx} ry={ry} fill="#f6e23c" />
      ))}
      <g
        fontFamily="Roboto, 'Liberation Sans', sans-serif"
        stroke="#292928"
        strokeWidth="3.5"
        strokeOpacity=".85"
        paintOrder="stroke"
      >
        {labels.map((l, i) => (
          <text key={i} x={l.x} y={l.y} fontSize={l.s} textLength={l.w} fill={l.c} fontWeight={l.b ?? 400}>
            {l.t}
          </text>
        ))}
        {streets.map((s) => (
          <React.Fragment key={s.id}>
            <path id={s.id} d={s.d} stroke="none" />
            <text fontSize={s.s} fill="#969696" textLength={s.w}>
              <textPath href={`#${s.id}`} textLength={s.w}>
                {s.t}
              </textPath>
            </text>
          </React.Fragment>
        ))}
      </g>
    </svg>
  );
}

function MapboxLogo() {
  return (
    <svg viewBox="0 0 142 38" className="h-[38px] w-[142px]">
      <circle cx="20.3" cy="18.6" r="15.7" fill="#2a2a29" opacity=".6" />
      <path
        fillRule="evenodd"
        fill="#f0f0f0"
        d="M20.3 3.9a14.7 14.7 0 1 0 0 29.4a14.7 14.7 0 1 0 0-29.4ZM13 25.6C11.800 19.500 13.200 14.200 16.700 11.700C20.300 9.300 25.200 9.900 27.400 13.200C29.900 16.900 28.700 21.300 25.800 23.700C22.600 26.200 17.500 26.400 13 25.600Z"
      />
      <path fill="#f0f0f0" d="M22 12.900L23.300 16L26.400 17.300L23.300 18.600L22 21.700L20.700 18.600L17.600 17.300L20.700 16Z" />
      <text
        x="41"
        y="26.500"
        fontSize="25.500"
        fontWeight="600"
        textLength="99.500"
        lengthAdjust="spacingAndGlyphs"
        fontFamily="Inter, sans-serif"
        fill="#f0f0f0"
        stroke="#2a2a29"
        strokeWidth="3"
        paintOrder="stroke"
      >
        mapbox
      </text>
    </svg>
  );
}

export default function App() {
  return (
    <main className="min-h-[1542px] w-full bg-[#0f1116] font-['Noto_Sans_CJK_JP','Noto_Sans_CJK_SC',sans-serif] text-[#fafafa]">
      <div className="ml-[312px] flex w-[1127px] flex-col pt-[81px]">
        <h1 className="h-[84px] text-[64px] leading-[84px] font-bold tracking-[-0.6px] whitespace-nowrap [-webkit-text-stroke:1.4px_#fafafa]">
          Hidden Markov Map Matching
        </h1>

        <label className="mt-[30px] h-[34px] text-[20px] leading-[34px] [-webkit-text-stroke:0.3px_#fafafa]">Choose a trip id</label>
        <button className="mt-[16px] flex h-[63px] w-full items-center justify-between rounded-md bg-[#262730] pr-[22px] pl-[17px] text-[23px]">
          <span className="-mt-[2px] [-webkit-text-stroke:0.3px_#fafafa]">5.0</span>
          <svg viewBox="0 0 16 10" className="mt-[2px] h-[10px] w-4 fill-[#fafafa]">
            <path d="M1.800 1H14.200Q15.200 1.400 14.500 2.300L9 8.400Q8 9.400 7 8.400L1.500 2.300Q.8 1.400 1.800 1Z" />
          </svg>
        </button>

        <label className="mt-[27px] h-[34px] text-[20px] leading-[34px] tracking-[0.03px] [-webkit-text-stroke:0.3px_#fafafa]">
          Sampling frequency of gps signals in seconds
        </label>
        <div className="mt-[12px] h-6 w-[195px] pl-[84px] font-['Liberation_Mono',monospace] text-[22.400px] leading-6 text-[#ee5a54]">61</div>
        <div className="mt-[3px] flex h-5 items-center">
          <div className="h-[6px] w-[88px] rounded-l-full bg-[#ee5a54]" />
          <div className="h-[19px] w-[19px] rounded-full bg-[#ee5a54]" />
          <div className="h-[6px] flex-1 rounded-r-full bg-[#383943]" />
        </div>
        <div className="mt-[4px] flex h-[46px] justify-between font-['Liberation_Mono',monospace] text-[22.400px] leading-[46px]">
          <span>10</span>
          <span>600</span>
        </div>

        <h2 className="mt-[25px] h-[64px] text-[40.500px] leading-[64px] font-bold tracking-[-0.930px] whitespace-nowrap">
          Most probable path for trip id 5.0
        </h2>

        <div className="relative mt-[36px] h-[800px] w-full overflow-hidden">
          <MapCanvas />
          <div className="absolute top-[19px] right-[21px] flex w-[46px] flex-col bg-[#0f1116] shadow-[0_0_0_3px_rgba(0,0,0,0.1)]">
            <button className="flex h-[47px] items-center justify-center border-b border-[#292a31]">
              <svg viewBox="0 0 20 20" className="h-5 w-5" stroke="#cfcfcf" strokeWidth="5" strokeLinecap="round">
                <path d="M3 10H17M10 3V17" />
              </svg>
            </button>
            <button className="flex h-[46px] items-center justify-center">
              <svg viewBox="0 0 20 20" className="h-5 w-5" stroke="#cfcfcf" strokeWidth="5" strokeLinecap="round">
                <path d="M3 10H17" />
              </svg>
            </button>
          </div>
          <div className="absolute bottom-[10px] left-[8px]">
            <MapboxLogo />
          </div>
          <div className="absolute right-0 bottom-0 flex h-8 w-[438px] items-center bg-white/50 pl-2 font-['Liberation_Sans',sans-serif] text-[19.200px] whitespace-pre text-black/75">
            <span className="tracking-[0.25px]">© Mapbox</span>
            <span className="ml-[5px] tracking-[0.25px]">© OpenStreetMap</span>
            <span className="ml-[9px] font-bold">Improve this map</span>
          </div>
        </div>
      </div>
    </main>
  );
}
